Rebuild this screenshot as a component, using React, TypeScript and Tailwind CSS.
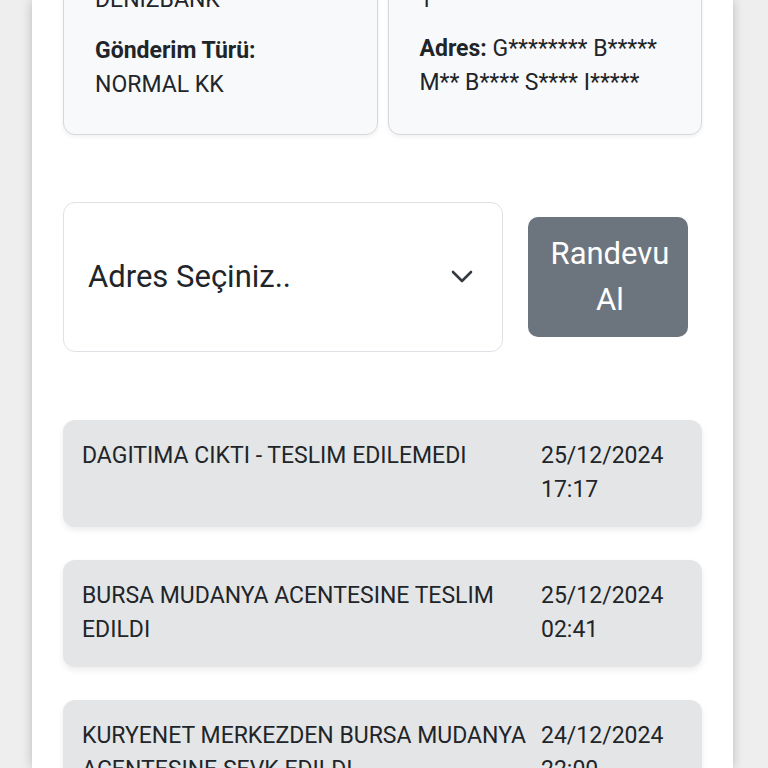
import React from "react";

const events = [
  { title: "DAGITIMA CIKTI - TESLIM EDILEMEDI", date: "25/12/2024 17:17" },
  { title: "BURSA MUDANYA ACENTESINE TESLIM EDILDI", date: "25/12/2024 02:41" },
  { title: "KURYENET MERKEZDEN BURSA MUDANYA ACENTESINE SEVK EDILDI", date: "24/12/2024 22:00" },
];

function InfoCard({ children }: { children: React.ReactNode }) {
  return (
    <div className="rounded-[12px] border border-[#d6d8db] bg-[#f8f9fa] px-[31px] py-[32px] shadow-[0_2px_4px_rgba(0,0,0,0.06)]">
      {children}
    </div>
  );
}

function Chevron() {
  return (
    <svg width="22" height="14" viewBox="0 0 22 14" fill="none">
      <path d="M2 2l9 9 9-9" stroke="#343a40" strokeWidth="2.6" strokeLinecap="round" strokeLinejoin="round" />
    </svg>
  );
}

export default function App() {
  return (
    <div
      className="flex h-[768px] w-[768px] overflow-hidden bg-[#eeeeee] text-[#212529]"
      style={{ fontFamily: "Roboto, 'Noto Sans', sans-serif" }}
    >
      <div className="relative ml-[32px] w-[701px] shrink-0 bg-white px-[31px] shadow-[0_0_10px_rgba(0,0,0,0.22)]">
        <div className="-mt-[84px] grid grid-cols-2 gap-[10px] text-[23px] leading-[34px]">
          <InfoCard>
            <p className="mb-[17px]">
              <b className="font-bold">Gönderici Firma:</b> DENIZBANK
            </p>
            <p>
              <b className="font-bold">Gönderim Türü:</b> NORMAL KK
            </p>
          </InfoCard>
          <InfoCard>
            <p className="mb-[15px]">
              <b className="font-bold">Parça Sayısı:</b>
              <br />1
            </p>
            <p>
              <b className="font-bold">Adres:</b> G******** B***** M** B**** S**** I*****
            </p>
          </InfoCard>
        </div>

        <div className="mt-[67px] flex items-center">
          <div className="flex h-[150px] w-[440px] items-center justify-between rounded-[12px] border border-[#dee2e6] pl-[24px] pr-[29px]">
            <span className="text-[31px]">Adres Seçiniz..</span>
            <Chevron />
          </div>
          <button className="ml-[25px] h-[120px] w-[160px] rounded-[10px] bg-[#6c757d] pl-[4px] text-[31px] leading-[46px] text-white">
            Randevu
            <br />
            Al
          </button>
        </div>

        <div className="mt-[68px] flex flex-col gap-[33px]">
          {events.map((e) => (
            <div
              key={e.title}
              className="flex rounded-[12px] bg-[#e4e5e7] px-[19px] pb-[20px] pt-[19px] text-[23px] leading-[34px] shadow-[0_3px_6px_rgba(0,0,0,0.08)]"
            >
              <div className="w-[459px] shrink-0">{e.title}</div>
              <div className="flex-1">{e.date}</div>
            </div>
          ))}
        </div>
      </div>
    </div>
  );
}
